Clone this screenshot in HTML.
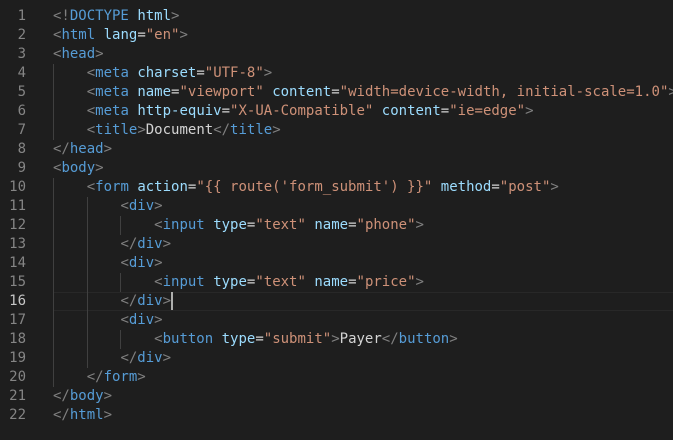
<!DOCTYPE html>
<html><head><meta charset="utf-8"><style>
html,body{margin:0;padding:0;background:#1e1e1e;width:673px;height:440px;overflow:hidden}
.ed{position:relative;top:2px;font-family:"DejaVu Sans Mono","Liberation Mono",monospace;font-size:14px;line-height:19px;}
.l{position:absolute;left:0;height:19px;white-space:pre;width:673px}
.n{position:absolute;right:647px;color:#858585;text-align:right}
.c{position:absolute;left:53px;color:#d4d4d4}
.cur .n{color:#c6c6c6}
.hl{position:absolute;left:53px;right:0;height:17px;border-top:1px solid #282828;border-bottom:1px solid #282828}
.g{position:absolute;width:1px;background:#404040}
.t{color:#569cd6}.b{color:#808080}.a{color:#9cdcfe}.s{color:#ce9178}
.caret{display:inline-block;width:2px;height:18px;background:#aeafad;vertical-align:top}
</style></head><body><div class="ed">
<div class="hl" style="top:290px"></div>
<div class="g" style="left:53px;top:62px;height:76px"></div>
<div class="g" style="left:53px;top:176px;height:209px"></div>
<div class="g" style="left:87px;top:195px;height:171px"></div>
<div class="g" style="left:120px;top:214px;height:19px"></div>
<div class="g" style="left:120px;top:271px;height:19px"></div>
<div class="g" style="left:120px;top:328px;height:19px"></div>
<div class="l" style="top:5px"><span class="n">1</span><span class="c"><span class="b">&lt;!</span><span class="t">DOCTYPE</span> <span class="a">html</span><span class="b">&gt;</span></span></div>
<div class="l" style="top:24px"><span class="n">2</span><span class="c"><span class="b">&lt;</span><span class="t">html</span> <span class="a">lang</span>=<span class="s">"en"</span><span class="b">&gt;</span></span></div>
<div class="l" style="top:43px"><span class="n">3</span><span class="c"><span class="b">&lt;</span><span class="t">head</span><span class="b">&gt;</span></span></div>
<div class="l" style="top:62px"><span class="n">4</span><span class="c">    <span class="b">&lt;</span><span class="t">meta</span> <span class="a">charset</span>=<span class="s">"UTF-8"</span><span class="b">&gt;</span></span></div>
<div class="l" style="top:81px"><span class="n">5</span><span class="c">    <span class="b">&lt;</span><span class="t">meta</span> <span class="a">name</span>=<span class="s">"viewport"</span> <span class="a">content</span>=<span class="s">"width=device-width, initial-scale=1.0"</span><span class="b">&gt;</span></span></div>
<div class="l" style="top:100px"><span class="n">6</span><span class="c">    <span class="b">&lt;</span><span class="t">meta</span> <span class="a">http-equiv</span>=<span class="s">"X-UA-Compatible"</span> <span class="a">content</span>=<span class="s">"ie=edge"</span><span class="b">&gt;</span></span></div>
<div class="l" style="top:119px"><span class="n">7</span><span class="c">    <span class="b">&lt;</span><span class="t">title</span><span class="b">&gt;</span>Document<span class="b">&lt;/</span><span class="t">title</span><span class="b">&gt;</span></span></div>
<div class="l" style="top:138px"><span class="n">8</span><span class="c"><span class="b">&lt;/</span><span class="t">head</span><span class="b">&gt;</span></span></div>
<div class="l" style="top:157px"><span class="n">9</span><span class="c"><span class="b">&lt;</span><span class="t">body</span><span class="b">&gt;</span></span></div>
<div class="l" style="top:176px"><span class="n">10</span><span class="c">    <span class="b">&lt;</span><span class="t">form</span> <span class="a">action</span>=<span class="s">"{{ route('form_submit') }}"</span> <span class="a">method</span>=<span class="s">"post"</span><span class="b">&gt;</span></span></div>
<div class="l" style="top:195px"><span class="n">11</span><span class="c">        <span class="b">&lt;</span><span class="t">div</span><span class="b">&gt;</span></span></div>
<div class="l" style="top:214px"><span class="n">12</span><span class="c">            <span class="b">&lt;</span><span class="t">input</span> <span class="a">type</span>=<span class="s">"text"</span> <span class="a">name</span>=<span class="s">"phone"</span><span class="b">&gt;</span></span></div>
<div class="l" style="top:233px"><span class="n">13</span><span class="c">        <span class="b">&lt;/</span><span class="t">div</span><span class="b">&gt;</span></span></div>
<div class="l" style="top:252px"><span class="n">14</span><span class="c">        <span class="b">&lt;</span><span class="t">div</span><span class="b">&gt;</span></span></div>
<div class="l" style="top:271px"><span class="n">15</span><span class="c">            <span class="b">&lt;</span><span class="t">input</span> <span class="a">type</span>=<span class="s">"text"</span> <span class="a">name</span>=<span class="s">"price"</span><span class="b">&gt;</span></span></div>
<div class="l cur" style="top:290px"><span class="n">16</span><span class="c">        <span class="b">&lt;/</span><span class="t">div</span><span class="b">&gt;</span><span class="caret"></span></span></div>
<div class="l" style="top:309px"><span class="n">17</span><span class="c">        <span class="b">&lt;</span><span class="t">div</span><span class="b">&gt;</span></span></div>
<div class="l" style="top:328px"><span class="n">18</span><span class="c">            <span class="b">&lt;</span><span class="t">button</span> <span class="a">type</span>=<span class="s">"submit"</span><span class="b">&gt;</span>Payer<span class="b">&lt;/</span><span class="t">button</span><span class="b">&gt;</span></span></div>
<div class="l" style="top:347px"><span class="n">19</span><span class="c">        <span class="b">&lt;/</span><span class="t">div</span><span class="b">&gt;</span></span></div>
<div class="l" style="top:366px"><span class="n">20</span><span class="c">    <span class="b">&lt;/</span><span class="t">form</span><span class="b">&gt;</span></span></div>
<div class="l" style="top:385px"><span class="n">21</span><span class="c"><span class="b">&lt;/</span><span class="t">body</span><span class="b">&gt;</span></span></div>
<div class="l" style="top:404px"><span class="n">22</span><span class="c"><span class="b">&lt;/</span><span class="t">html</span><span class="b">&gt;</span></span></div>
</div></body></html>
